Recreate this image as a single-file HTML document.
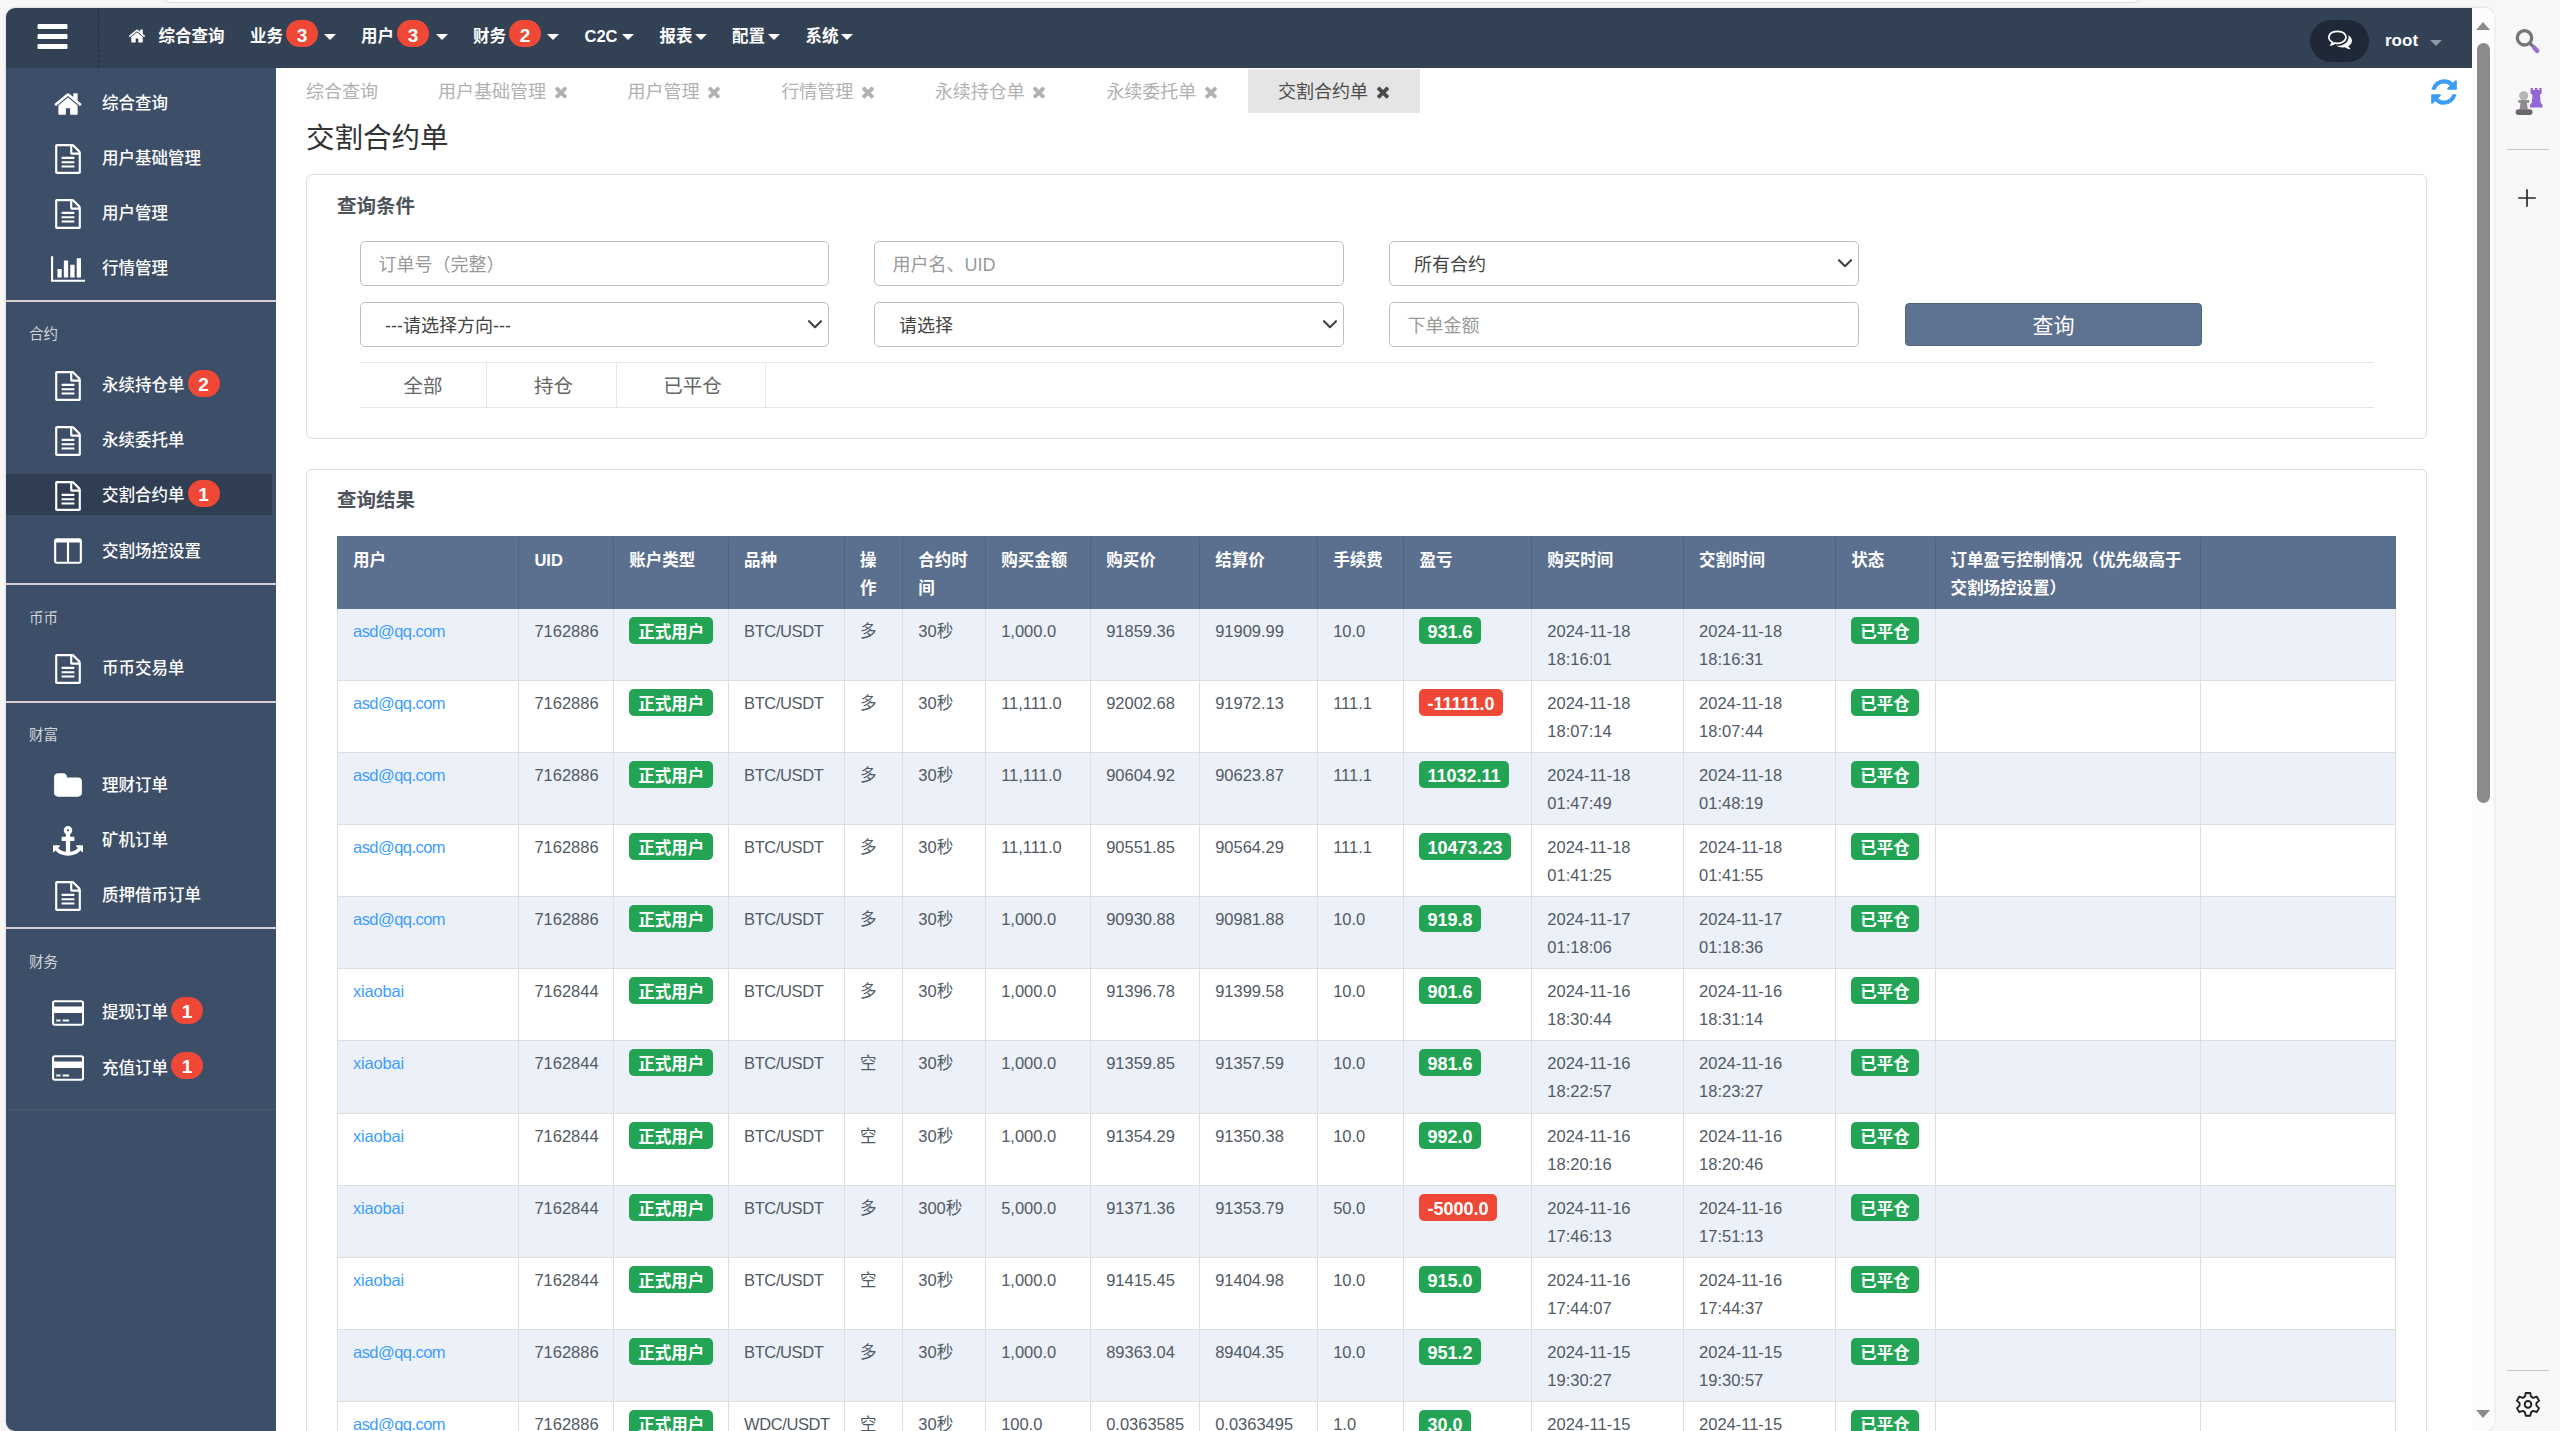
<!DOCTYPE html>
<html lang="zh-CN">
<head>
<meta charset="utf-8">
<title>交割合约单</title>
<style>
*{box-sizing:border-box}
html,body{margin:0;padding:0}
body{width:2560px;height:1431px;overflow:hidden;background:#f7f7f7;font-family:"Liberation Sans","Noto Sans CJK SC",sans-serif;font-size:16.5px;color:#4a4a4a;position:relative}
svg{display:block}
.l{font-family:"Liberation Sans","Noto Sans CJK SC",sans-serif}
/* ---------- browser chrome ---------- */
#chrome-top{position:absolute;left:0;top:0;width:2560px;height:8px;background:#f7f7f7}
#chrome-top i{position:absolute;left:164px;top:-10px;width:1976px;height:12px;border-radius:6px;background:#fff;box-shadow:0 0 2px rgba(0,0,0,.35)}
#edgebar{position:absolute;left:2494px;top:0;width:66px;height:1431px;background:#f7f7f7}
#edgeline{position:absolute;left:2494px;top:17px;width:2px;height:1405px;background:#f0f0f0}
#edgebar .sep{position:absolute;left:13px;width:42px;height:1px;background:#c8c8c8}
#edgebar svg{position:absolute}
/* ---------- page ---------- */
#page{position:absolute;left:6px;top:8px;width:2488px;height:1423px;background:#fff;border-radius:9px;overflow:hidden;box-shadow:0 0 3px rgba(0,0,0,.18)}
#vscroll{position:absolute;left:2466px;top:0;width:22px;height:1423px;background:#fcfcfc}
#vscroll .thumb{position:absolute;left:5px;top:35px;width:13px;height:760px;border-radius:7px;background:#8b8b8b}
#vscroll .up{position:absolute;left:4px;top:14px;width:0;height:0;border-left:7.5px solid transparent;border-right:7.5px solid transparent;border-bottom:8px solid #8b8b8b}
#vscroll .down{position:absolute;left:4px;top:1402px;width:0;height:0;border-left:7.5px solid transparent;border-right:7.5px solid transparent;border-top:8px solid #8b8b8b}
/* ---------- top nav ---------- */
#topnav{position:absolute;left:0;top:0;width:2466px;height:60px;background:#334155;color:#fff}
#topnav .burger{position:absolute;left:28.5px;top:10.5px}
#topnav .vline{position:absolute;left:92px;top:0;width:0;height:60px;border-left:1px dashed #232d3d}
#topnav .item{position:absolute;top:0;height:60px;line-height:56px;font-weight:700;font-size:16.5px;white-space:nowrap}
#topnav .nb{display:inline-block;vertical-align:middle;min-width:32px;height:27px;line-height:32px;border-radius:14px;background:#ef4836;color:#fff;font-size:19px;font-weight:700;text-align:center;margin:-8px 0 0 3px}
#topnav .caret{position:absolute;top:26px;margin-left:-1px;width:0;height:0;border-left:6px solid transparent;border-right:6px solid transparent;border-top:6px solid #fff}
#chat{position:absolute;left:2304px;top:12px;width:59px;height:42px;border-radius:21px;background:#1f2836}
#chat svg{position:absolute;left:18px;top:7px}
#root{position:absolute;left:2379px;top:0;line-height:66px;font-weight:700;font-size:17px;color:#fff}
#rootcaret{position:absolute;left:2424px;top:32px;width:0;height:0;border-left:6px solid transparent;border-right:6px solid transparent;border-top:6px solid #8e98a8}
/* ---------- sidebar ---------- */
#side{position:absolute;left:0;top:60px;width:270px;height:1363px;background:#3d4e68;color:#fff}
#side .mi{position:absolute;left:0;width:266px;height:41px}
#side .mi.on{background:#303e53}
#side .mi svg{position:absolute}
#side .mi .t{position:absolute;left:96px;top:1px;line-height:41px;font-size:16.5px;font-weight:500;white-space:nowrap}
#side .sb{display:inline-block;vertical-align:middle;min-width:32px;height:27px;line-height:29px;border-radius:14px;background:#ef4836;color:#fff;font-size:19px;font-weight:700;text-align:center;margin:-7px 0 0 3px}
#side .hd{position:absolute;left:23px;font-size:14.5px;color:#d0d3d8;line-height:20px}
#side .hr{position:absolute;left:0;width:270px;height:2px;background:#d9cfd0;margin-top:0.5px}
#side .hr2{position:absolute;left:0;width:270px;height:1px;background:#4a5a73}
/* ---------- content ---------- */
#main{position:absolute;left:270px;top:60px;width:2196px;height:1363px;background:#fff}
#tabs{position:absolute;left:0;top:0;height:45px;width:2196px;display:flex}
#tabs .tab{margin-top:1px;padding:0 30px;height:44px;line-height:47px;font-size:18px;color:#b1b1b1;white-space:nowrap}
#tabs .tab svg{display:inline-block;vertical-align:middle;margin:-2px 0 0 7.6px}
#tabs .tab.on{background:#e5e5e5;color:#4c4c4c;padding:0 30px}
#refresh{position:absolute;left:2153px;top:9.400px}
h1{position:absolute;left:30px;top:48px;margin:0;font-size:28.5px;font-weight:400;color:#333;line-height:44px;white-space:nowrap}
.panel{position:absolute;left:30px;width:2121px;border:1px solid #ddd;border-radius:6px;background:#fff}
.panel h3{position:absolute;left:30px;top:16px;margin:0;font-size:19.5px;font-weight:700;color:#4d545c;line-height:30px}
.fc{position:absolute;height:45px;border:1px solid #b9c0ca;border-radius:5px;background:#fff;font-size:18px;line-height:47px;padding-left:17.5px;color:#999;white-space:nowrap}
.fc.sel{color:#444;padding-left:24px;line-height:47px}
.fc.sel svg{position:absolute;right:4px;top:14px}
#qbtn{position:absolute;left:1598px;top:128px;width:297px;height:43px;border-radius:4px;background:#5e7291;color:#fff;font-size:21px;line-height:43px;text-align:center;border:1px solid #53657f}
#ftabs{position:absolute;left:53px;top:187px;width:2014px;height:46px;border-top:1px solid #e6e6e6;border-bottom:1px solid #e6e6e6}
#ftabs span{position:absolute;top:0;height:44px;line-height:47px;font-size:19.5px;color:#666;text-align:center;border-right:1px solid #e6e6e6}
/* ---------- table ---------- */
table{position:absolute;left:30px;top:66px;border-collapse:separate;border-spacing:0;table-layout:fixed;width:2059px;font-size:16.5px}
th{background:#5b6f8f;color:#fff;font-weight:700;text-align:left;vertical-align:top;padding:9px 8px 7px 15px;line-height:28px;border-left:1px solid #51637f;border-top:1px solid #5b6f8f;border-bottom:1px solid #5b6f8f;height:72.91px}
th:first-child{border-left:1px solid #5b6f8f;padding-left:15px}
th{padding-top:9px;padding-bottom:5px}
td{vertical-align:top;padding:8px 8px 7px 15px;line-height:28px;border-left:1px solid #ddd;border-bottom:1px solid #ddd;height:72.1px;color:#525a64;white-space:nowrap}
td:last-child{border-right:1px solid #ddd}
tr:nth-child(odd) td{background:#ecf0f8}
tr:nth-child(even) td{background:#fff}
td a{color:#409eff;letter-spacing:-0.55px}
.bd{display:inline-block;height:27px;line-height:31px;padding:0 9px;border-radius:5px;color:#fff;font-weight:700;font-size:16.5px;vertical-align:top;margin-top:0}
.bd.g{background:#23a455}
.bd.r{background:#ef4836}
#p2 h3{top:15px}
.bd.n{font-size:18px;padding:0 8px}
td a.x{letter-spacing:-0.2px}
td.s{letter-spacing:-0.4px}
</style>
</head>
<body>
<div id="chrome-top"><i></i></div>

<div id="page">
  <div id="topnav">
    <div class="burger"><svg width="35" height="35" viewBox="0 0 1792 1792" ><path fill="#fff" d="M1664 1344v128q0 26-19 45t-45 19h-1408q-26 0-45-19t-19-45v-128q0-26 19-45t45-19h1408q26 0 45 19t19 45zm0-512v128q0 26-19 45t-45 19h-1408q-26 0-45-19t-19-45v-128q0-26 19-45t45-19h1408q26 0 45 19t19 45zm0-512v128q0 26-19 45t-45 19h-1408q-26 0-45-19t-19-45v-128q0-26 19-45t45-19h1408q26 0 45 19t19 45z"/></svg></div>
    <div class="vline"></div>
    <div class="item" style="left:122px;top:19px;height:20px;line-height:20px"><svg width="18" height="18" viewBox="0 0 1792 1792" ><path fill="#fff" d="M1472 992v480q0 26-19 45t-45 19h-384v-384h-256v384h-384q-26 0-45-19t-19-45v-480q0-1 .5-3t.5-3l575-474 575 474q1 2 1 6zm223-69l-62 74q-8 9-21 11h-3q-13 0-21-7l-692-577-692 577q-12 8-24 7-13-2-21-11l-62-74q-8-10-7-23.5t11-21.5l719-599q32-26 76-26t76 26l244 204v-195q0-14 9-23t23-9h192q14 0 23 9t9 23v408l219 182q10 8 11 21.5t-7 23.5z"/></svg></div>
    <div class="item" style="left:152.5px">综合查询</div>
    <div class="item" style="left:244px">业务<span class="nb">3</span></div><div class="caret" style="left:318.5px"></div>
    <div class="item" style="left:355px">用户<span class="nb">3</span></div><div class="caret" style="left:430.5px"></div>
    <div class="item" style="left:467px">财务<span class="nb">2</span></div><div class="caret" style="left:542px"></div>
    <div class="item" style="left:578.5px"><span class="l">C2C</span></div><div class="caret" style="left:617px"></div>
    <div class="item" style="left:653.5px">报表</div><div class="caret" style="left:689.5px"></div>
    <div class="item" style="left:726px">配置</div><div class="caret" style="left:762.5px"></div>
    <div class="item" style="left:799.5px">系统</div><div class="caret" style="left:835.5px"></div>
    <div id="chat"><svg width="24" height="24" viewBox="0 0 1792 1792" ><path fill="#fff" d="M704 384q-153 0-286 52t-211.500 141-78.500 191q0 82 53 158t149 132l97 56-35 84q34-20 62-39l44-31 53 10q78 14 153 14 153 0 286-52t211.500-141 78.500-191-78.500-191-211.500-141-286-52zm0-128q191 0 353.500 68.500t256.500 186.500 94 257-94 257-256.500 186.500-353.500 68.500q-86 0-176-16-124 88-278 128-36 9-86 16h-3q-11 0-20.500-8t-11.500-21q-1-3-1-6.500t.5-6.500 2-6l2.500-5 3.500-5.500 4-5 4.500-5 4-4.500q5-6 23-25t26-29.500 22.500-29 25-38.500 20.500-44q-124-72-195-177t-71-224q0-139 94-257t256.500-186.500 353.500-68.500zm822 1169q10 24 20.500 44t25 38.500 22.500 29 26 29.500 23 25q1 1 4 4.500t4.500 5 4 5 3.500 5.500l2.500 5 2 6 .5 6.500-1 6.500q-3 14-13 22t-22 7q-50-7-86-16-154-40-278-128-90 16-176 16-271 0-472-132 58 4 88 4 161 0 309-45t264-129q125-92 192-212t67-254q0-77-23-152 129 71 204 178t75 230q0 120-71 224.500t-195 176.500z"/></svg></div>
    <div id="root" class="l">root</div><div id="rootcaret"></div>
  </div>
  <div id="side">
    <div class="mi" style="top:14.3px"><svg width="30.00" height="30" viewBox="0 0 1792 1792" style="left:47.00px;top:6.5px"><path fill="#fff" d="M1472 992v480q0 26-19 45t-45 19h-384v-384h-256v384h-384q-26 0-45-19t-19-45v-480q0-1 .5-3t.5-3l575-474 575 474q1 2 1 6zm223-69l-62 74q-8 9-21 11h-3q-13 0-21-7l-692-577-692 577q-12 8-24 7-13-2-21-11l-62-74q-8-10-7-23.5t11-21.5l719-599q32-26 76-26t76 26l244 204v-195q0-14 9-23t23-9h192q14 0 23 9t9 23v408l219 182q10 8 11 21.5t-7 23.5z"/></svg><span class="t">综合查询</span></div>
    <div class="mi" style="top:69.3px"><svg width="30.00" height="30" viewBox="0 0 1792 1792" style="left:47.00px;top:6.5px"><path fill="#fff" d="M1596 380q28 28 48 76t20 88v1152q0 40-28 68t-68 28h-1344q-40 0-68-28t-28-68v-1600q0-40 28-68t68-28h896q40 0 88 20t76 48zm-444-244v376h376q-10-29-22-41l-313-313q-12-12-41-22zm384 1528v-1024h-416q-40 0-68-28t-28-68v-416h-768v1536h1280zm-1024-864q0-14 9-23t23-9h704q14 0 23 9t9 23v64q0 14-9 23t-23 9h-704q-14 0-23-9t-9-23v-64zm736 224q14 0 23 9t9 23v64q0 14-9 23t-23 9h-704q-14 0-23-9t-9-23v-64q0-14 9-23t23-9h704zm0 256q14 0 23 9t9 23v64q0 14-9 23t-23 9h-704q-14 0-23-9t-9-23v-64q0-14 9-23t23-9h704z"/></svg><span class="t">用户基础管理</span></div>
    <div class="mi" style="top:124.3px"><svg width="30.00" height="30" viewBox="0 0 1792 1792" style="left:47.00px;top:6.5px"><path fill="#fff" d="M1596 380q28 28 48 76t20 88v1152q0 40-28 68t-68 28h-1344q-40 0-68-28t-28-68v-1600q0-40 28-68t68-28h896q40 0 88 20t76 48zm-444-244v376h376q-10-29-22-41l-313-313q-12-12-41-22zm384 1528v-1024h-416q-40 0-68-28t-28-68v-416h-768v1536h1280zm-1024-864q0-14 9-23t23-9h704q14 0 23 9t9 23v64q0 14-9 23t-23 9h-704q-14 0-23-9t-9-23v-64zm736 224q14 0 23 9t9 23v64q0 14-9 23t-23 9h-704q-14 0-23-9t-9-23v-64q0-14 9-23t23-9h704zm0 256q14 0 23 9t9 23v64q0 14-9 23t-23 9h-704q-14 0-23-9t-9-23v-64q0-14 9-23t23-9h704z"/></svg><span class="t">用户管理</span></div>
    <div class="mi" style="top:179.3px"><svg width="34.29" height="30" viewBox="0 0 2048 1792" style="left:44.86px;top:6.5px"><path fill="#fff" d="M640 896v512h-256v-512h256zm384-512v1024h-256v-1024h256zm1024 1152v128h-2048v-1536h128v1408h1920zm-640-896v768h-256v-768h256zm384-384v1152h-256v-1152h256z"/></svg><span class="t">行情管理</span></div>
    <div class="hr" style="top:231.2px"></div>
    <div class="hd" style="top:256.0px">合约</div>
    <div class="mi" style="top:296.3px"><svg width="30.00" height="30" viewBox="0 0 1792 1792" style="left:47.00px;top:6.5px"><path fill="#fff" d="M1596 380q28 28 48 76t20 88v1152q0 40-28 68t-68 28h-1344q-40 0-68-28t-28-68v-1600q0-40 28-68t68-28h896q40 0 88 20t76 48zm-444-244v376h376q-10-29-22-41l-313-313q-12-12-41-22zm384 1528v-1024h-416q-40 0-68-28t-28-68v-416h-768v1536h1280zm-1024-864q0-14 9-23t23-9h704q14 0 23 9t9 23v64q0 14-9 23t-23 9h-704q-14 0-23-9t-9-23v-64zm736 224q14 0 23 9t9 23v64q0 14-9 23t-23 9h-704q-14 0-23-9t-9-23v-64q0-14 9-23t23-9h704zm0 256q14 0 23 9t9 23v64q0 14-9 23t-23 9h-704q-14 0-23-9t-9-23v-64q0-14 9-23t23-9h704z"/></svg><span class="t">永续持仓单<span class="sb">2</span></span></div>
    <div class="mi" style="top:351.3px"><svg width="30.00" height="30" viewBox="0 0 1792 1792" style="left:47.00px;top:6.5px"><path fill="#fff" d="M1596 380q28 28 48 76t20 88v1152q0 40-28 68t-68 28h-1344q-40 0-68-28t-28-68v-1600q0-40 28-68t68-28h896q40 0 88 20t76 48zm-444-244v376h376q-10-29-22-41l-313-313q-12-12-41-22zm384 1528v-1024h-416q-40 0-68-28t-28-68v-416h-768v1536h1280zm-1024-864q0-14 9-23t23-9h704q14 0 23 9t9 23v64q0 14-9 23t-23 9h-704q-14 0-23-9t-9-23v-64zm736 224q14 0 23 9t9 23v64q0 14-9 23t-23 9h-704q-14 0-23-9t-9-23v-64q0-14 9-23t23-9h704zm0 256q14 0 23 9t9 23v64q0 14-9 23t-23 9h-704q-14 0-23-9t-9-23v-64q0-14 9-23t23-9h704z"/></svg><span class="t">永续委托单</span></div>
    <div class="mi on" style="top:406.1px"><svg width="30.00" height="30" viewBox="0 0 1792 1792" style="left:47.00px;top:6.5px"><path fill="#fff" d="M1596 380q28 28 48 76t20 88v1152q0 40-28 68t-68 28h-1344q-40 0-68-28t-28-68v-1600q0-40 28-68t68-28h896q40 0 88 20t76 48zm-444-244v376h376q-10-29-22-41l-313-313q-12-12-41-22zm384 1528v-1024h-416q-40 0-68-28t-28-68v-416h-768v1536h1280zm-1024-864q0-14 9-23t23-9h704q14 0 23 9t9 23v64q0 14-9 23t-23 9h-704q-14 0-23-9t-9-23v-64zm736 224q14 0 23 9t9 23v64q0 14-9 23t-23 9h-704q-14 0-23-9t-9-23v-64q0-14 9-23t23-9h704zm0 256q14 0 23 9t9 23v64q0 14-9 23t-23 9h-704q-14 0-23-9t-9-23v-64q0-14 9-23t23-9h704z"/></svg><span class="t">交割合约单<span class="sb">1</span></span></div>
    <div class="mi" style="top:461.7px"><svg width="30.00" height="30" viewBox="0 0 1792 1792" style="left:47.00px;top:6.5px"><path fill="#fff" d="M224 1536h608v-1152h-640v1120q0 13 9.500 22.500t22.500 9.500zm1376-32v-1120h-640v1152h608q13 0 22.500-9.500t9.500-22.500zm128-1216v1216q0 66-47 113t-113 47h-1344q-66 0-113-47t-47-113v-1216q0-66 47-113t113-47h1344q66 0 113 47t47 113z"/></svg><span class="t">交割场控设置</span></div>
    <div class="hr" style="top:514.9px"></div>
    <div class="hd" style="top:539.5px">币币</div>
    <div class="mi" style="top:579.0px"><svg width="30.00" height="30" viewBox="0 0 1792 1792" style="left:47.00px;top:6.5px"><path fill="#fff" d="M1596 380q28 28 48 76t20 88v1152q0 40-28 68t-68 28h-1344q-40 0-68-28t-28-68v-1600q0-40 28-68t68-28h896q40 0 88 20t76 48zm-444-244v376h376q-10-29-22-41l-313-313q-12-12-41-22zm384 1528v-1024h-416q-40 0-68-28t-28-68v-416h-768v1536h1280zm-1024-864q0-14 9-23t23-9h704q14 0 23 9t9 23v64q0 14-9 23t-23 9h-704q-14 0-23-9t-9-23v-64zm736 224q14 0 23 9t9 23v64q0 14-9 23t-23 9h-704q-14 0-23-9t-9-23v-64q0-14 9-23t23-9h704zm0 256q14 0 23 9t9 23v64q0 14-9 23t-23 9h-704q-14 0-23-9t-9-23v-64q0-14 9-23t23-9h704z"/></svg><span class="t">币币交易单</span></div>
    <div class="hr" style="top:632.0px"></div>
    <div class="hd" style="top:656.5px">财富</div>
    <div class="mi" style="top:696.0px"><svg width="30.00" height="30" viewBox="0 0 1792 1792" style="left:47.00px;top:6.5px"><path fill="#fff" d="M1728 608v704q0 92-66 158t-158 66h-1216q-92 0-158-66t-66-158v-960q0-92 66-158t158-66h320q92 0 158 66t66 158v32h672q92 0 158 66t66 158z"/></svg><span class="t">理财订单</span></div>
    <div class="mi" style="top:751.0px"><svg width="30.00" height="30" viewBox="0 0 1792 1792" style="left:47.00px;top:6.5px"><path fill="#fff" d="M960 256q0-26-19-45t-45-19-45 19-19 45 19 45 45 19 45-19 19-45zm832 928v352q0 22-20 30-8 2-12 2-12 0-23-9l-93-93q-119 143-318.500 226.500t-429.500 83.500-429.500-83.500-318.500-226.500l-93 93q-9 9-23 9-4 0-12-2-20-8-20-30v-352q0-14 9-23t23-9h352q22 0 30 20 8 19-7 35l-100 100q67 91 189.500 153.500t271.500 82.500v-647h-192q-26 0-45-19t-19-45v-128q0-26 19-45t45-19h192v-163q-58-34-93-92.500t-35-128.500q0-106 75-181t181-75 181 75 75 181q0 70-35 128.500t-93 92.500v163h192q26 0 45 19t19 45v128q0 26-19 45t-45 19h-192v647q149-20 271.500-82.500t189.500-153.500l-100-100q-15-16-7-35 8-20 30-20h352q14 0 23 9t9 23z"/></svg><span class="t">矿机订单</span></div>
    <div class="mi" style="top:806.0px"><svg width="30.00" height="30" viewBox="0 0 1792 1792" style="left:47.00px;top:6.5px"><path fill="#fff" d="M1596 380q28 28 48 76t20 88v1152q0 40-28 68t-68 28h-1344q-40 0-68-28t-28-68v-1600q0-40 28-68t68-28h896q40 0 88 20t76 48zm-444-244v376h376q-10-29-22-41l-313-313q-12-12-41-22zm384 1528v-1024h-416q-40 0-68-28t-28-68v-416h-768v1536h1280zm-1024-864q0-14 9-23t23-9h704q14 0 23 9t9 23v64q0 14-9 23t-23 9h-704q-14 0-23-9t-9-23v-64zm736 224q14 0 23 9t9 23v64q0 14-9 23t-23 9h-704q-14 0-23-9t-9-23v-64q0-14 9-23t23-9h704zm0 256q14 0 23 9t9 23v64q0 14-9 23t-23 9h-704q-14 0-23-9t-9-23v-64q0-14 9-23t23-9h704z"/></svg><span class="t">质押借币订单</span></div>
    <div class="hr" style="top:858.8px"></div>
    <div class="hd" style="top:883.5px">财务</div>
    <div class="mi" style="top:923.0px"><svg width="32.14" height="30" viewBox="0 0 1920 1792" style="left:45.93px;top:6.5px"><path fill="#fff" d="M1760 128q66 0 113 47t47 113v1216q0 66-47 113t-113 47h-1600q-66 0-113-47t-47-113v-1216q0-66 47-113t113-47h1600zm-1600 128q-13 0-22.500 9.500t-9.500 22.500v224h1664v-224q0-13-9.500-22.500t-22.500-9.500h-1600zm1600 1280q13 0 22.500-9.500t9.500-22.500v-608h-1664v608q0 13 9.500 22.500t22.500 9.500h1600zm-1504-128v-128h256v128h-256zm384 0v-128h384v128h-384z"/></svg><span class="t">提现订单<span class="sb">1</span></span></div>
    <div class="mi" style="top:978.5px"><svg width="32.14" height="30" viewBox="0 0 1920 1792" style="left:45.93px;top:6.5px"><path fill="#fff" d="M1760 128q66 0 113 47t47 113v1216q0 66-47 113t-113 47h-1600q-66 0-113-47t-47-113v-1216q0-66 47-113t113-47h1600zm-1600 128q-13 0-22.500 9.500t-9.500 22.500v224h1664v-224q0-13-9.500-22.500t-22.500-9.500h-1600zm1600 1280q13 0 22.500-9.500t9.500-22.500v-608h-1664v608q0 13 9.500 22.500t22.500 9.500h1600zm-1504-128v-128h256v128h-256zm384 0v-128h384v128h-384z"/></svg><span class="t">充值订单<span class="sb">1</span></span></div>
    <div class="hr2" style="top:1041px"></div>
    </div>
  <div id="main">
    <div id="tabs">
      <div class="tab">综合查询</div><div class="tab">用户基础管理<svg width="14" height="18" viewBox="192 0 1408 1792"><path fill="#b1b1b1" d="M1490 1322q0 40-28 68l-136 136q-28 28-68 28t-68-28l-294-294-294 294q-28 28-68 28t-68-28l-136-136q-28-28-28-68t28-68l294-294-294-294q-28-28-28-68t28-68l136-136q28-28 68-28t68 28l294 294 294-294q28-28 68-28t68 28l136 136q28 28 28 68t-28 68l-294 294 294 294q28 28 28 68z"/></svg></div><div class="tab">用户管理<svg width="14" height="18" viewBox="192 0 1408 1792"><path fill="#b1b1b1" d="M1490 1322q0 40-28 68l-136 136q-28 28-68 28t-68-28l-294-294-294 294q-28 28-68 28t-68-28l-136-136q-28-28-28-68t28-68l294-294-294-294q-28-28-28-68t28-68l136-136q28-28 68-28t68 28l294 294 294-294q28-28 68-28t68 28l136 136q28 28 28 68t-28 68l-294 294 294 294q28 28 28 68z"/></svg></div><div class="tab">行情管理<svg width="14" height="18" viewBox="192 0 1408 1792"><path fill="#b1b1b1" d="M1490 1322q0 40-28 68l-136 136q-28 28-68 28t-68-28l-294-294-294 294q-28 28-68 28t-68-28l-136-136q-28-28-28-68t28-68l294-294-294-294q-28-28-28-68t28-68l136-136q28-28 68-28t68 28l294 294 294-294q28-28 68-28t68 28l136 136q28 28 28 68t-28 68l-294 294 294 294q28 28 28 68z"/></svg></div><div class="tab">永续持仓单<svg width="14" height="18" viewBox="192 0 1408 1792"><path fill="#b1b1b1" d="M1490 1322q0 40-28 68l-136 136q-28 28-68 28t-68-28l-294-294-294 294q-28 28-68 28t-68-28l-136-136q-28-28-28-68t28-68l294-294-294-294q-28-28-28-68t28-68l136-136q28-28 68-28t68 28l294 294 294-294q28-28 68-28t68 28l136 136q28 28 28 68t-28 68l-294 294 294 294q28 28 28 68z"/></svg></div><div class="tab">永续委托单<svg width="14" height="18" viewBox="192 0 1408 1792"><path fill="#b1b1b1" d="M1490 1322q0 40-28 68l-136 136q-28 28-68 28t-68-28l-294-294-294 294q-28 28-68 28t-68-28l-136-136q-28-28-28-68t28-68l294-294-294-294q-28-28-28-68t28-68l136-136q28-28 68-28t68 28l294 294 294-294q28-28 68-28t68 28l136 136q28 28 28 68t-28 68l-294 294 294 294q28 28 28 68z"/></svg></div><div class="tab on">交割合约单<svg width="14" height="18" viewBox="192 0 1408 1792"><path fill="#4c4c4c" d="M1490 1322q0 40-28 68l-136 136q-28 28-68 28t-68-28l-294-294-294 294q-28 28-68 28t-68-28l-136-136q-28-28-28-68t28-68l294-294-294-294q-28-28-28-68t28-68l136-136q28-28 68-28t68 28l294 294 294-294q28-28 68-28t68 28l136 136q28 28 28 68t-28 68l-294 294 294 294q28 28 28 68z"/></svg></div>
    </div>
    <div id="refresh"><svg width="30" height="30" viewBox="0 0 1792 1792"><path fill="#3d9cf5" d="M1639 1056q0 5-1 7-64 268-268 434.500t-478 166.500q-146 0-282.500-55t-243.500-157l-129 129q-19 19-45 19t-45-19-19-45v-448q0-26 19-45t45-19h448q26 0 45 19t19 45-19 45l-137 137q71 66 161 102t187 36q134 0 250-65t186-179q11-17 53-117 8-23 30-23h192q13 0 22.500 9.500t9.500 22.500zm25-800v448q0 26-19 45t-45 19h-448q-26 0-45-19t-19-45 19-45l138-138q-148-137-349-137-134 0-250 65t-186 179q-11 17-53 117-8 23-30 23h-199q-13 0-22.500-9.500t-9.500-22.500v-7q65-268 270-434.500t480-166.500q146 0 284 55.500t245 156.500l130-129q19-19 45-19t45 19 19 45z"/></svg></div>
    <h1>交割合约单</h1>
    <div class="panel" id="p1" style="top:106px;height:265px">
      <h3>查询条件</h3>
      <div class="fc" style="left:53px;top:66px;width:469px">订单号（完整）</div>
      <div class="fc" style="left:567px;top:66px;width:470px">用户名、<span class="l">UID</span></div>
      <div class="fc sel" style="left:1082px;top:66px;width:470px">所有合约<svg width="18" height="14" viewBox="0 0 18 14"><path d="M3 4.2l6 6 6-6" fill="none" stroke="#444" stroke-width="2.2" stroke-linecap="round" stroke-linejoin="round"/></svg></div>
      <div class="fc sel" style="left:53px;top:127px;width:469px">---请选择方向---<svg width="18" height="14" viewBox="0 0 18 14"><path d="M3 4.2l6 6 6-6" fill="none" stroke="#444" stroke-width="2.2" stroke-linecap="round" stroke-linejoin="round"/></svg></div>
      <div class="fc sel" style="left:567px;top:127px;width:470px">请选择<svg width="18" height="14" viewBox="0 0 18 14"><path d="M3 4.2l6 6 6-6" fill="none" stroke="#444" stroke-width="2.2" stroke-linecap="round" stroke-linejoin="round"/></svg></div>
      <div class="fc" style="left:1082px;top:127px;width:470px">下单金额</div>
      <div id="qbtn">查询</div>
      <div id="ftabs"><span style="left:0;width:127px">全部</span><span style="left:127px;width:130px;padding-left:4px">持仓</span><span style="left:257px;width:149px;padding-left:3px">已平仓</span></div>
    </div>
    <div class="panel" id="p2" style="top:401px;height:1000px">
      <h3>查询结果</h3>
      <table>
        <colgroup><col style="width:181.4px"><col style="width:94.9px"><col style="width:114.8px"><col style="width:116px"><col style="width:58.2px"><col style="width:82.9px"><col style="width:105px"><col style="width:109px"><col style="width:118px"><col style="width:86.3px"><col style="width:127.9px"><col style="width:151.7px"><col style="width:152.1px"><col style="width:99.4px"><col style="width:265.8px"><col style="width:195.6px"></colgroup>
        <thead><tr><th>用户</th><th><span class="l">UID</span></th><th>账户类型</th><th>品种</th><th>操<br>作</th><th>合约时<br>间</th><th>购买金额</th><th>购买价</th><th>结算价</th><th>手续费</th><th>盈亏</th><th>购买时间</th><th>交割时间</th><th>状态</th><th>订单盈亏控制情况（优先级高于<br>交割场控设置）</th><th></th></tr></thead>
        <tbody>
<tr><td><a class="l ">asd@qq.com</a></td><td class="l">7162886</td><td><span class="bd g">正式用户</span></td><td class="l s">BTC/USDT</td><td>多</td><td><span class="l">30</span>秒</td><td class="l">1,000.0</td><td class="l">91859.36</td><td class="l">91909.99</td><td class="l">10.0</td><td><span class="bd g n">931.6</span></td><td class="l">2024-11-18<br>18:16:01</td><td class="l">2024-11-18<br>18:16:31</td><td><span class="bd g">已平仓</span></td><td></td><td></td></tr>
<tr><td><a class="l ">asd@qq.com</a></td><td class="l">7162886</td><td><span class="bd g">正式用户</span></td><td class="l s">BTC/USDT</td><td>多</td><td><span class="l">30</span>秒</td><td class="l">11,111.0</td><td class="l">92002.68</td><td class="l">91972.13</td><td class="l">111.1</td><td><span class="bd r n">-11111.0</span></td><td class="l">2024-11-18<br>18:07:14</td><td class="l">2024-11-18<br>18:07:44</td><td><span class="bd g">已平仓</span></td><td></td><td></td></tr>
<tr><td><a class="l ">asd@qq.com</a></td><td class="l">7162886</td><td><span class="bd g">正式用户</span></td><td class="l s">BTC/USDT</td><td>多</td><td><span class="l">30</span>秒</td><td class="l">11,111.0</td><td class="l">90604.92</td><td class="l">90623.87</td><td class="l">111.1</td><td><span class="bd g n">11032.11</span></td><td class="l">2024-11-18<br>01:47:49</td><td class="l">2024-11-18<br>01:48:19</td><td><span class="bd g">已平仓</span></td><td></td><td></td></tr>
<tr><td><a class="l ">asd@qq.com</a></td><td class="l">7162886</td><td><span class="bd g">正式用户</span></td><td class="l s">BTC/USDT</td><td>多</td><td><span class="l">30</span>秒</td><td class="l">11,111.0</td><td class="l">90551.85</td><td class="l">90564.29</td><td class="l">111.1</td><td><span class="bd g n">10473.23</span></td><td class="l">2024-11-18<br>01:41:25</td><td class="l">2024-11-18<br>01:41:55</td><td><span class="bd g">已平仓</span></td><td></td><td></td></tr>
<tr><td><a class="l ">asd@qq.com</a></td><td class="l">7162886</td><td><span class="bd g">正式用户</span></td><td class="l s">BTC/USDT</td><td>多</td><td><span class="l">30</span>秒</td><td class="l">1,000.0</td><td class="l">90930.88</td><td class="l">90981.88</td><td class="l">10.0</td><td><span class="bd g n">919.8</span></td><td class="l">2024-11-17<br>01:18:06</td><td class="l">2024-11-17<br>01:18:36</td><td><span class="bd g">已平仓</span></td><td></td><td></td></tr>
<tr><td><a class="l x">xiaobai</a></td><td class="l">7162844</td><td><span class="bd g">正式用户</span></td><td class="l s">BTC/USDT</td><td>多</td><td><span class="l">30</span>秒</td><td class="l">1,000.0</td><td class="l">91396.78</td><td class="l">91399.58</td><td class="l">10.0</td><td><span class="bd g n">901.6</span></td><td class="l">2024-11-16<br>18:30:44</td><td class="l">2024-11-16<br>18:31:14</td><td><span class="bd g">已平仓</span></td><td></td><td></td></tr>
<tr><td><a class="l x">xiaobai</a></td><td class="l">7162844</td><td><span class="bd g">正式用户</span></td><td class="l s">BTC/USDT</td><td>空</td><td><span class="l">30</span>秒</td><td class="l">1,000.0</td><td class="l">91359.85</td><td class="l">91357.59</td><td class="l">10.0</td><td><span class="bd g n">981.6</span></td><td class="l">2024-11-16<br>18:22:57</td><td class="l">2024-11-16<br>18:23:27</td><td><span class="bd g">已平仓</span></td><td></td><td></td></tr>
<tr><td><a class="l x">xiaobai</a></td><td class="l">7162844</td><td><span class="bd g">正式用户</span></td><td class="l s">BTC/USDT</td><td>空</td><td><span class="l">30</span>秒</td><td class="l">1,000.0</td><td class="l">91354.29</td><td class="l">91350.38</td><td class="l">10.0</td><td><span class="bd g n">992.0</span></td><td class="l">2024-11-16<br>18:20:16</td><td class="l">2024-11-16<br>18:20:46</td><td><span class="bd g">已平仓</span></td><td></td><td></td></tr>
<tr><td><a class="l x">xiaobai</a></td><td class="l">7162844</td><td><span class="bd g">正式用户</span></td><td class="l s">BTC/USDT</td><td>多</td><td><span class="l">300</span>秒</td><td class="l">5,000.0</td><td class="l">91371.36</td><td class="l">91353.79</td><td class="l">50.0</td><td><span class="bd r n">-5000.0</span></td><td class="l">2024-11-16<br>17:46:13</td><td class="l">2024-11-16<br>17:51:13</td><td><span class="bd g">已平仓</span></td><td></td><td></td></tr>
<tr><td><a class="l x">xiaobai</a></td><td class="l">7162844</td><td><span class="bd g">正式用户</span></td><td class="l s">BTC/USDT</td><td>空</td><td><span class="l">30</span>秒</td><td class="l">1,000.0</td><td class="l">91415.45</td><td class="l">91404.98</td><td class="l">10.0</td><td><span class="bd g n">915.0</span></td><td class="l">2024-11-16<br>17:44:07</td><td class="l">2024-11-16<br>17:44:37</td><td><span class="bd g">已平仓</span></td><td></td><td></td></tr>
<tr><td><a class="l ">asd@qq.com</a></td><td class="l">7162886</td><td><span class="bd g">正式用户</span></td><td class="l s">BTC/USDT</td><td>多</td><td><span class="l">30</span>秒</td><td class="l">1,000.0</td><td class="l">89363.04</td><td class="l">89404.35</td><td class="l">10.0</td><td><span class="bd g n">951.2</span></td><td class="l">2024-11-15<br>19:30:27</td><td class="l">2024-11-15<br>19:30:57</td><td><span class="bd g">已平仓</span></td><td></td><td></td></tr>
<tr><td><a class="l ">asd@qq.com</a></td><td class="l">7162886</td><td><span class="bd g">正式用户</span></td><td class="l s">WDC/USDT</td><td>空</td><td><span class="l">30</span>秒</td><td class="l">100.0</td><td class="l">0.0363585</td><td class="l">0.0363495</td><td class="l">1.0</td><td><span class="bd g n">30.0</span></td><td class="l">2024-11-15<br>19:27:33</td><td class="l">2024-11-15<br>19:28:03</td><td><span class="bd g">已平仓</span></td><td></td><td></td></tr>
        </tbody>
      </table>
    </div>
  </div>
  <div id="vscroll"><div class="up"></div><div class="thumb"></div><div class="down"></div></div>
</div>

<div id="edgebar">
  <svg style="left:19px;top:26px" width="30" height="30" viewBox="0 0 30 30"><circle cx="11.5" cy="11.8" r="7.200" fill="none" stroke="#767676" stroke-width="3.300"/><path d="M16.600 16.900l3.900 4" stroke="#767676" stroke-width="3.300"/><path d="M21.300 21.800l2.900 3" stroke="#9a6fd8" stroke-width="4.600" stroke-linecap="round"/></svg>
  <svg style="left:19px;top:86px" width="32" height="32" viewBox="0 0 32 32"><path fill="#9368d4" d="M17.600 2h2.300v2h1.900v-2h2.600v2h1.900v-2h2.300v5.400l-1.700 1.500 .8 7.800 1.700 2.100v2.800h-12.400v-2.800l1.700-2.100 .8-7.800-1.900-1.500z"/><circle cx="10.700" cy="9.700" r="4.500" fill="#b4b4b6"/><path fill="#8e8b90" d="M5.300 14h10.800v2.800h-2.200l.9 6.800h-8.200l.9-6.800h-2.200z"/><rect x="2.700" y="23.300" width="16.800" height="5.600" rx="2.700" fill="#6d666e"/></svg>
  <div class="sep" style="top:149px"></div>
  <svg style="left:23px;top:188px" width="20" height="20" viewBox="0 0 20 20"><path d="M10 1.200v17.600M1.200 10h17.600" stroke="#2b2b2b" stroke-width="1.700" fill="none"/></svg>
  <div class="sep" style="top:1370px"></div>
  <svg style="left:17.600px;top:1389px" width="32" height="33.300" viewBox="0 0 24 24"><path fill="none" stroke="#1f1f1f" stroke-width="1.400" stroke-linejoin="round" d="M10.300 2.500h3.400l.6 2.700 1.700 .95 2.600-.85 1.700 2.950-2 1.850v1.900l2 1.850-1.700 2.950-2.600-.85-1.700 .95-.6 2.700h-3.400l-.6-2.700-1.700-.95-2.600 .85-1.700-2.950 2-1.850v-1.900l-2-1.850 1.700-2.950 2.600 .85 1.700-.95z"/><circle cx="12" cy="11.050" r="2.500" fill="none" stroke="#1f1f1f" stroke-width="1.400"/></svg>
</div>
<div id="edgeline"></div>
</body>
</html>
